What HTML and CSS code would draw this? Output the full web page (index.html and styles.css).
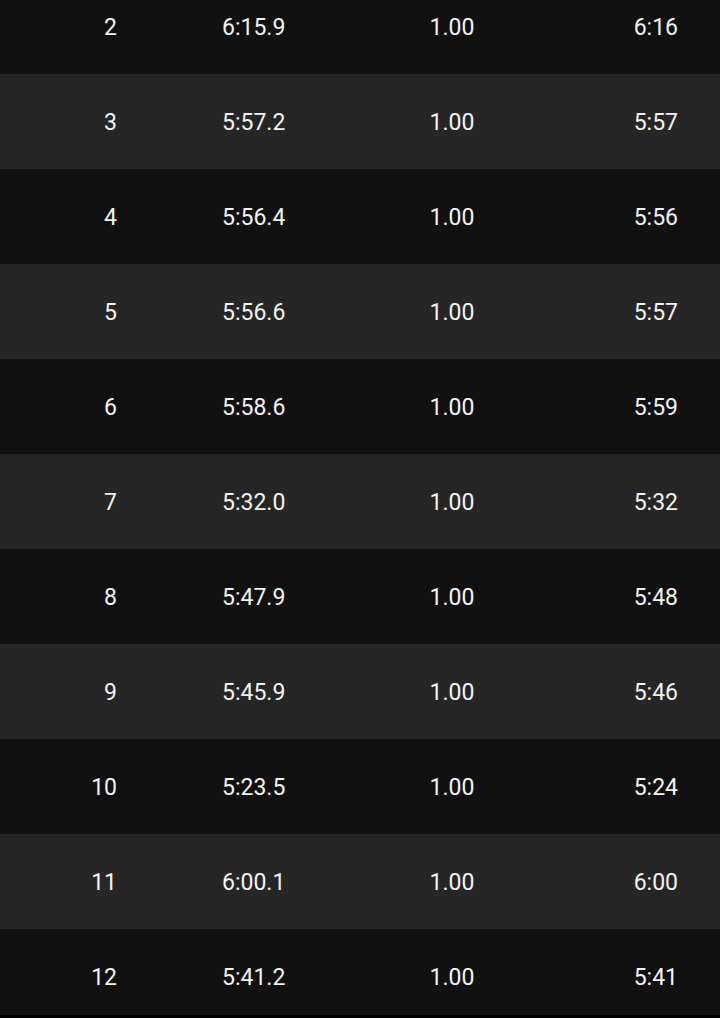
FILE: index.html
```html
<!DOCTYPE html>
<html>
<head>
<meta charset="utf-8">
<link rel="stylesheet" href="styles.css">
</head>
<body>
<div class="viewport">
  <div class="splits">
    <div class="row dark"><span class="num">2</span><span class="time">6:15.9</span><span class="dist">1.00</span><span class="pace">6:16</span></div>
    <div class="row light"><span class="num">3</span><span class="time">5:57.2</span><span class="dist">1.00</span><span class="pace">5:57</span></div>
    <div class="row dark"><span class="num">4</span><span class="time">5:56.4</span><span class="dist">1.00</span><span class="pace">5:56</span></div>
    <div class="row light"><span class="num">5</span><span class="time">5:56.6</span><span class="dist">1.00</span><span class="pace">5:57</span></div>
    <div class="row dark"><span class="num">6</span><span class="time">5:58.6</span><span class="dist">1.00</span><span class="pace">5:59</span></div>
    <div class="row light"><span class="num">7</span><span class="time">5:32.0</span><span class="dist">1.00</span><span class="pace">5:32</span></div>
    <div class="row dark"><span class="num">8</span><span class="time">5:47.9</span><span class="dist">1.00</span><span class="pace">5:48</span></div>
    <div class="row light"><span class="num">9</span><span class="time">5:45.9</span><span class="dist">1.00</span><span class="pace">5:46</span></div>
    <div class="row dark"><span class="num">10</span><span class="time">5:23.5</span><span class="dist">1.00</span><span class="pace">5:24</span></div>
    <div class="row light"><span class="num">11</span><span class="time">6:00.1</span><span class="dist">1.00</span><span class="pace">6:00</span></div>
    <div class="row dark"><span class="num">12</span><span class="time">5:41.2</span><span class="dist">1.00</span><span class="pace">5:41</span></div>
  </div>
</div>
</body>
</html>
```
FILE: styles.css
```css
html, body {
  margin: 0;
  padding: 0;
  background: #000000;
}
.viewport {
  height: 1015px;
  overflow: hidden;
  background: #111111;
}
.splits {
  margin-top: -21px;
  display: flex;
  flex-direction: column;
}
.row {
  height: 95px;
  display: grid;
  grid-template-columns: 117px 226px 218px 117px;
  align-items: center;
  padding-top: 2px;
  box-sizing: border-box;
  font-family: Roboto, "Noto Sans", sans-serif;
  font-size: 23px;
  color: #f2f2f2;
}
.dark { background: #111111; }
.light { background: #262626; }
.num { text-align: right; }
.time { text-align: left; padding-left: 105px; }
.dist { text-align: center; }
.pace { text-align: right; }
```
